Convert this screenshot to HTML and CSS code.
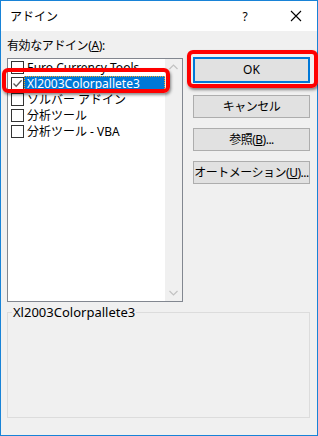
FILE: index.html
```html
<!DOCTYPE html>
<html lang="ja">
<head>
    <meta charset="UTF-8">
    <title>アドイン</title>
    <link rel="stylesheet" href="styles.css">
</head>
<body>
    <div class="window">
        <div class="titlebar">
            <span class="title">アドイン</span>
            <span class="help">?</span>
            <span class="close">
                <svg width="12" height="12" viewBox="0 0 12 12"><path d="M1 1 L11 11 M11 1 L1 11" stroke="#000" stroke-width="1.1" fill="none"/></svg>
            </span>
        </div>
        <div class="content">
            <div class="label">有効なアドイン(<u>A</u>):</div>
            <div class="main">
                <div class="listbox">
                    <ul class="items">
                        <li><span class="check"></span><span class="name">Euro Currency Tools</span></li>
                        <li class="selected">
                            <span class="check">
                                <svg width="11" height="11" viewBox="0 0 11 11"><path d="M1.5 5.5 L4.2 8.3 L9.6 2.2" stroke="#5a5a5a" stroke-width="1.3" fill="none"/></svg>
                            </span>
                            <span class="name">Xl2003Colorpallete3</span>
                        </li>
                        <li><span class="check"></span><span class="name">ソルバー アドイン</span></li>
                        <li><span class="check"></span><span class="name">分析ツール</span></li>
                        <li><span class="check"></span><span class="name">分析ツール - VBA</span></li>
                    </ul>
                    <div class="scrollbar">
                        <svg width="17" height="17" viewBox="0 0 17 17"><path d="M4.5 10 L8.5 6 L12.5 10" stroke="#c2c2c2" stroke-width="1.2" fill="none"/></svg>
                        <svg width="17" height="17" viewBox="0 0 17 17"><path d="M4.5 7 L8.5 11 L12.5 7" stroke="#c2c2c2" stroke-width="1.2" fill="none"/></svg>
                    </div>
                    <div class="mark mark-row"></div>
                </div>
                <div class="buttons">
                    <div class="btn btn-default">OK<div class="mark mark-ok"></div></div>
                    <div class="btn">キャンセル</div>
                    <div class="btn">参照(<u>B</u>)...</div>
                    <div class="btn">オートメーション(<u>U</u>)...</div>
                </div>
            </div>
            <fieldset class="group">
                <legend>Xl2003Colorpallete3</legend>
            </fieldset>
        </div>
    </div>
</body>
</html>
```

FILE: styles.css
```css
body {
    margin: 0;
    font-family: "Noto Sans", "Noto Sans CJK JP", sans-serif;
    font-size: 12px;
    color: #000;
    background: #fff;
}

.window {
    width: 316px;
    height: 434px;
    border: 1px solid #1883d7;
    background-color: #f0f0f0;
    display: flex;
    flex-direction: column;
}

.titlebar {
    height: 30px;
    background-color: #fff;
    display: flex;
    align-items: center;
}

.title {
    margin-left: 9px;
    flex: 1;
}

.help {
    width: 14px;
    text-align: center;
    margin-right: 38px;
}

.close {
    display: flex;
    margin-right: 15px;
}

.content {
    flex: 1;
    padding: 6px 7px 0 6px;
}

.label {
    height: 21px;
    line-height: 18px;
    letter-spacing: -0.4px;
}

.main {
    display: flex;
    gap: 10px;
}

/* list box */
.listbox {
    position: relative;
    width: 174px;
    height: 242px;
    border: 1px solid #828790;
    background-color: #fff;
    display: flex;
}

.items {
    list-style: none;
    margin: 0;
    padding: 0;
    flex: 1;
}

.items li {
    height: 16px;
    display: flex;
    align-items: center;
    white-space: nowrap;
}

.check {
    width: 11px;
    height: 11px;
    border: 1px solid #333;
    background-color: #fff;
    margin-left: 3px;
    display: flex;
}

.name {
    padding: 0 2px 0 3px;
    line-height: 15px;
}

.selected .name {
    width: 136px;
    background-color: #0078d7;
    color: #fff;
    outline: 1px dotted #f5a623;
    outline-offset: -1px;
}

.scrollbar {
    width: 17px;
    background-color: #f0f0f0;
    display: flex;
    flex-direction: column;
    justify-content: space-between;
}

/* red annotation frames */
.mark {
    position: absolute;
    border: 4px solid #ff0000;
    border-radius: 6px;
    box-shadow: 1px 2px 3px rgba(0, 0, 0, 0.45);
    pointer-events: none;
}

.mark-row {
    left: -6px;
    top: 9px;
    width: 160px;
    height: 17px;
}

.mark-ok {
    left: -8px;
    top: -9px;
    width: 123px;
    height: 30px;
}

/* buttons */
.buttons {
    display: flex;
    flex-direction: column;
    width: 117px;
    margin-top: -1px;
}

.btn {
    position: relative;
    height: 21px;
    line-height: 21px;
    border: 1px solid #adadad;
    background-color: #e1e1e1;
    text-align: center;
    margin-bottom: 10px;
    white-space: nowrap;
    letter-spacing: -0.5px;
}

.btn-default {
    height: 22px;
    line-height: 22px;
    border: 2px solid #0078d7;
    margin-bottom: 12px;
    letter-spacing: 0;
}

/* group box */
.group {
    margin: 3px 0 0 0;
    padding: 0;
    height: 113px;
    border: 1px solid #dcdcdc;
    box-sizing: border-box;
}

.group legend {
    margin-left: 4px;
    padding: 0 1px;
    font-size: 13px;
    line-height: 15px;
}
```
